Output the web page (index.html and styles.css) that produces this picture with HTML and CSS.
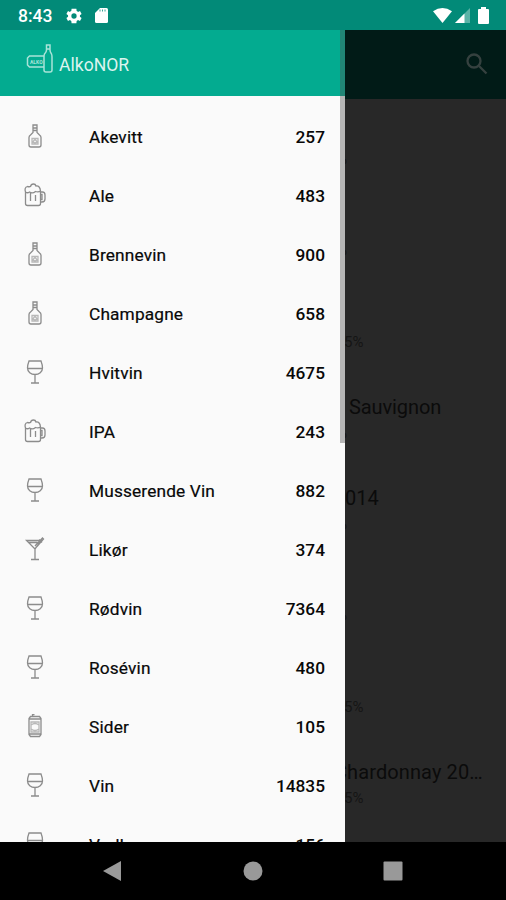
FILE: index.html
```
<!DOCTYPE html>
<html lang="no">
  <head>
    <meta charset="utf-8">
    <title>AlkoNOR</title>
    <link rel="stylesheet" href="styles.css">
  </head>
  <body>
    <svg class="defs">
      <symbol id="bottle" viewBox="0 0 24 24">
        <path d="M10 1h4v3h-4zM10 4v4.500L7.500 11Q6 12 6 13.500V21q0 2 2 2h8q2 0 2-2v-7.500q0-1.500-1.500-2.500L14 8.500V4M10 6.500h4"/>
        <path d="M9 14.500h6v5.500H9zM12 15.500l2 2-2 2-2-2z" stroke-opacity=".6"/>
      </symbol>
      <symbol id="beer" viewBox="0 0 24 24">
        <path d="M2.500 9v11.500q0 2 2 2h11q2 0 2-2V8M2.500 9Q1 4.500 4.500 3.500q2 .5 3 0Q8 1 10.500 1q2 0 2.500 2 4-.5 4.500 5-2 1.500-5 .5-3 2.500-6 .5-2 1.500-4 0M17.500 9h2q2.500 0 2.500 3v4q0 3-3 3h-1.500M17.500 11.500h1.500v5h-1.500M7.500 10v8M12.500 12v6"/>
      </symbol>
      <symbol id="wine" viewBox="0 0 24 24">
        <path d="M6 1h12q1.500 4 1.500 7c0 4-3.500 6.500-7.500 6.500S4.500 12 4.500 8Q4.500 5 6 1zM4.500 8.500h15M12 14.500v8M8 23h8"/>
      </symbol>
      <symbol id="cocktail" viewBox="0 0 24 24">
        <path d="M3.500 3.500h15L12 12zM5.500 5.500h9M12 12v10M8 22.500h8M12 9l7.500-8 1 1L14 9.500M16 2.500l3 3"/>
      </symbol>
      <symbol id="can" viewBox="0 0 24 24">
        <path d="M7.500 2.500h9l1.500 2v16l-1.500 2h-9L6 20.500v-16zM6 5h12M6 20h12M9.500 2.500V.500h2"/>
        <path d="M8 8v10h8V8zM8 11q4-3 8 0M8 15q4 3 8 0" stroke-opacity=".6"/>
      </symbol>
    </svg>

    <div class="screen">
      <header class="status">
        <span class="clock">8:43</span>
        <svg class="gear" viewBox="2 2 20 20"><path fill-rule="evenodd" d="M19.400 13a7 7 0 0 0 0-2l2.100-1.600-2-3.500-2.500 1a7 7 0 0 0-1.700-1L15 3H9l-.4 2.900a7 7 0 0 0-1.700 1l-2.400-1-2 3.500L4.600 11a7 7 0 0 0 0 2l-2.100 1.600 2 3.500 2.400-1a7 7 0 0 0 1.700 1L9 21h6l.300-2.900a7 7 0 0 0 1.700-1l2.500 1 2-3.500zM12 15.300a3.300 3.300 0 1 1 0-6.600 3.300 3.300 0 0 1 0 6.600z"/></svg>
        <svg class="sd" viewBox="0 0 13 15"><path d="M5 0h6.500Q13 0 13 1.500v12q0 1.500-1.500 1.500h-10Q0 15 0 13.500V5z"/><path class="pins" d="M5 1.500v2M7.500 1.500v2M10 1.500v2"/></svg>
        <svg class="wifi" viewBox="0 0 19 15"><path d="M0 3.200Q9.500-3 19 3.200L9.500 15z"/></svg>
        <svg class="signal" viewBox="0 0 15 15"><path opacity=".35" d="M0 15L15 0v15z"/><path d="M0 15L9.500 5.500V15z"/></svg>
        <svg class="battery" viewBox="0 0 11 17"><path d="M3 0h5v2h2q1 0 1 1v13q0 1-1 1H1q-1 0-1-1V3q0-1 1-1h2z"/></svg>
      </header>

      <main>
        <nav class="drawer">
          <div class="brand">
            <svg class="logo" viewBox="0 0 27 30">
              <path d="M20.500 1h3.500v5q0 2 1.500 4 .5 1 .5 3v13q0 2-2 2h-4q-2 0-2-2V13q0-2 .5-3 2-2 2-4zM20.500 5h3.500M18 12H3.500L1.500 14v7l2 2H18"/>
              <text x="4" y="19.500">ALKO</text>
            </svg>
            <span>AlkoNOR</span>
          </div>
          <ul class="types">
            <li><svg><use href="#bottle"/></svg><span>Akevitt</span><b>257</b></li>
            <li><svg><use href="#beer"/></svg><span>Ale</span><b>483</b></li>
            <li><svg><use href="#bottle"/></svg><span>Brennevin</span><b>900</b></li>
            <li><svg><use href="#bottle"/></svg><span>Champagne</span><b>658</b></li>
            <li><svg><use href="#wine"/></svg><span>Hvitvin</span><b>4675</b></li>
            <li><svg><use href="#beer"/></svg><span>IPA</span><b>243</b></li>
            <li><svg><use href="#wine"/></svg><span>Musserende Vin</span><b>882</b></li>
            <li><svg><use href="#cocktail"/></svg><span>Likør</span><b>374</b></li>
            <li><svg><use href="#wine"/></svg><span>Rødvin</span><b>7364</b></li>
            <li><svg><use href="#wine"/></svg><span>Rosévin</span><b>480</b></li>
            <li><svg><use href="#can"/></svg><span>Sider</span><b>105</b></li>
            <li><svg><use href="#wine"/></svg><span>Vin</span><b>14835</b></li>
            <li><svg><use href="#wine"/></svg><span>Vodka</span><b>156</b></li>
          </ul>
          <div class="scrollbar"></div>
        </nav>

        <section class="content">
          <div class="toolbar">
            <svg viewBox="0 0 22 22"><circle cx="8" cy="8" r="6.500"/><path d="M13 13l7.500 7.500"/></svg>
          </div>
          <ul class="products">
            <li><h2>&nbsp;</h2><p class="cut">%</p></li>
            <li><h2>&nbsp;</h2><p class="cut">%</p></li>
            <li><h2>&nbsp;</h2><p>5%</p></li>
            <li><h2 class="inset">Sauvignon</h2><p class="cut">%</p></li>
            <li><h2>014</h2><p class="cut">%</p></li>
            <li><h2>&nbsp;</h2><p class="cut">%</p></li>
            <li><h2>&nbsp;</h2><p>5%</p></li>
            <li><h2 class="long">Chardonnay 20…</h2><p>5%</p></li>
          </ul>
        </section>
      </main>

      <footer class="keys">
        <svg viewBox="0 0 20 20"><path d="M19 0v20L1 10z"/></svg>
        <svg viewBox="0 0 20 20"><circle cx="10" cy="10" r="9.500"/></svg>
        <svg viewBox="0 0 20 20"><rect x=".5" y=".5" width="19" height="19" rx="1"/></svg>
      </footer>
    </div>
  </body>
</html>
```
FILE: styles.css
```
body {
  margin: 0;
  font-family: Roboto, sans-serif;
  background: #000;
}

ul, h2, p {
  margin: 0;
  padding: 0;
  list-style: none;
}

.defs {
  display: none;
}

.screen {
  display: flex;
  flex-direction: column;
  width: 506px;
  height: 900px;
  overflow: hidden;
}

.status {
  display: flex;
  align-items: center;
  box-sizing: border-box;
  height: 30px;
  padding: 1px 17px 0 18px;
  background: #028a78;
  color: #fff;
  fill: #fff;
}

.clock {
  width: 48px;
  font-size: 17.5px;
  font-weight: 500;
}

.gear {
  width: 16px;
  height: 16px;
}

.sd {
  width: 13px;
  height: 15px;
  margin-left: 13px;
}

.pins {
  stroke: #028a78;
  stroke-width: .8;
}

.wifi {
  width: 19px;
  height: 15px;
  margin-left: auto;
}

.signal {
  width: 15px;
  height: 15px;
  margin: 0 8px 0 3px;
}

.battery {
  width: 11px;
  height: 17px;
}

main {
  display: flex;
  height: 812px;
}

.drawer {
  position: relative;
  width: 345px;
  overflow: hidden;
  background: #fafafa;
}

.brand {
  display: flex;
  box-sizing: border-box;
  height: 66px;
  padding: 14px 0 0 26px;
  background: #03ab90;
  color: #dcf4ef;
  font-size: 17.6px;
}

.brand span {
  margin: 11px 0 0 6px;
}

.logo {
  width: 27px;
  height: 30px;
  fill: none;
  stroke: #a9e3d8;
  stroke-width: 1.5;
}

.logo text {
  font-size: 5px;
  font-weight: 700;
  fill: #a9e3d8;
  stroke: none;
}

.types {
  padding-top: 11px;
}

.types li {
  display: flex;
  align-items: center;
  height: 59px;
  padding: 0 20px 0 23px;
  color: #080808;
  font-size: 17.3px;
}

.types svg {
  width: 24px;
  height: 24px;
  margin: 0 42px 2px 0;
  fill: none;
  stroke: #8c8c8c;
  stroke-width: 1.3;
}

.types span {
  letter-spacing: .15px;
  -webkit-text-stroke: .2px #080808;
}

.types b {
  margin-left: auto;
  font-weight: 500;
}

.scrollbar {
  position: absolute;
  top: 0;
  right: 0;
  width: 5px;
  height: 413px;
  background: rgba(80, 80, 80, .4);
}

.content {
  width: 161px;
  overflow: hidden;
  background: #282828;
}

.toolbar {
  display: flex;
  justify-content: flex-end;
  box-sizing: border-box;
  height: 69px;
  padding: 23px 18px 0 0;
  background: #011b17;
}

.toolbar svg {
  width: 22px;
  height: 22px;
  fill: none;
  stroke: #35413f;
  stroke-width: 2.3;
}

.products li {
  box-sizing: border-box;
  height: 91.3px;
  padding-top: 22px;
  white-space: nowrap;
}

.products h2 {
  color: #0b0b0b;
  font-size: 20px;
  font-weight: 400;
  line-height: 24px;
}

.products .inset {
  padding-left: 4px;
  letter-spacing: -.1px;
}

.products .long {
  margin-left: -11px;
  letter-spacing: .1px;
}

.products p {
  margin-left: -1px;
  color: #151515;
  font-size: 15px;
  line-height: 29px;
}

.products .cut {
  margin-left: -9px;
}

.keys {
  display: flex;
  align-items: center;
  justify-content: space-between;
  height: 58px;
  padding: 0 103px 0 102px;
  background: #000;
  fill: #999;
}

.keys svg {
  width: 20px;
  height: 20px;
}
```
